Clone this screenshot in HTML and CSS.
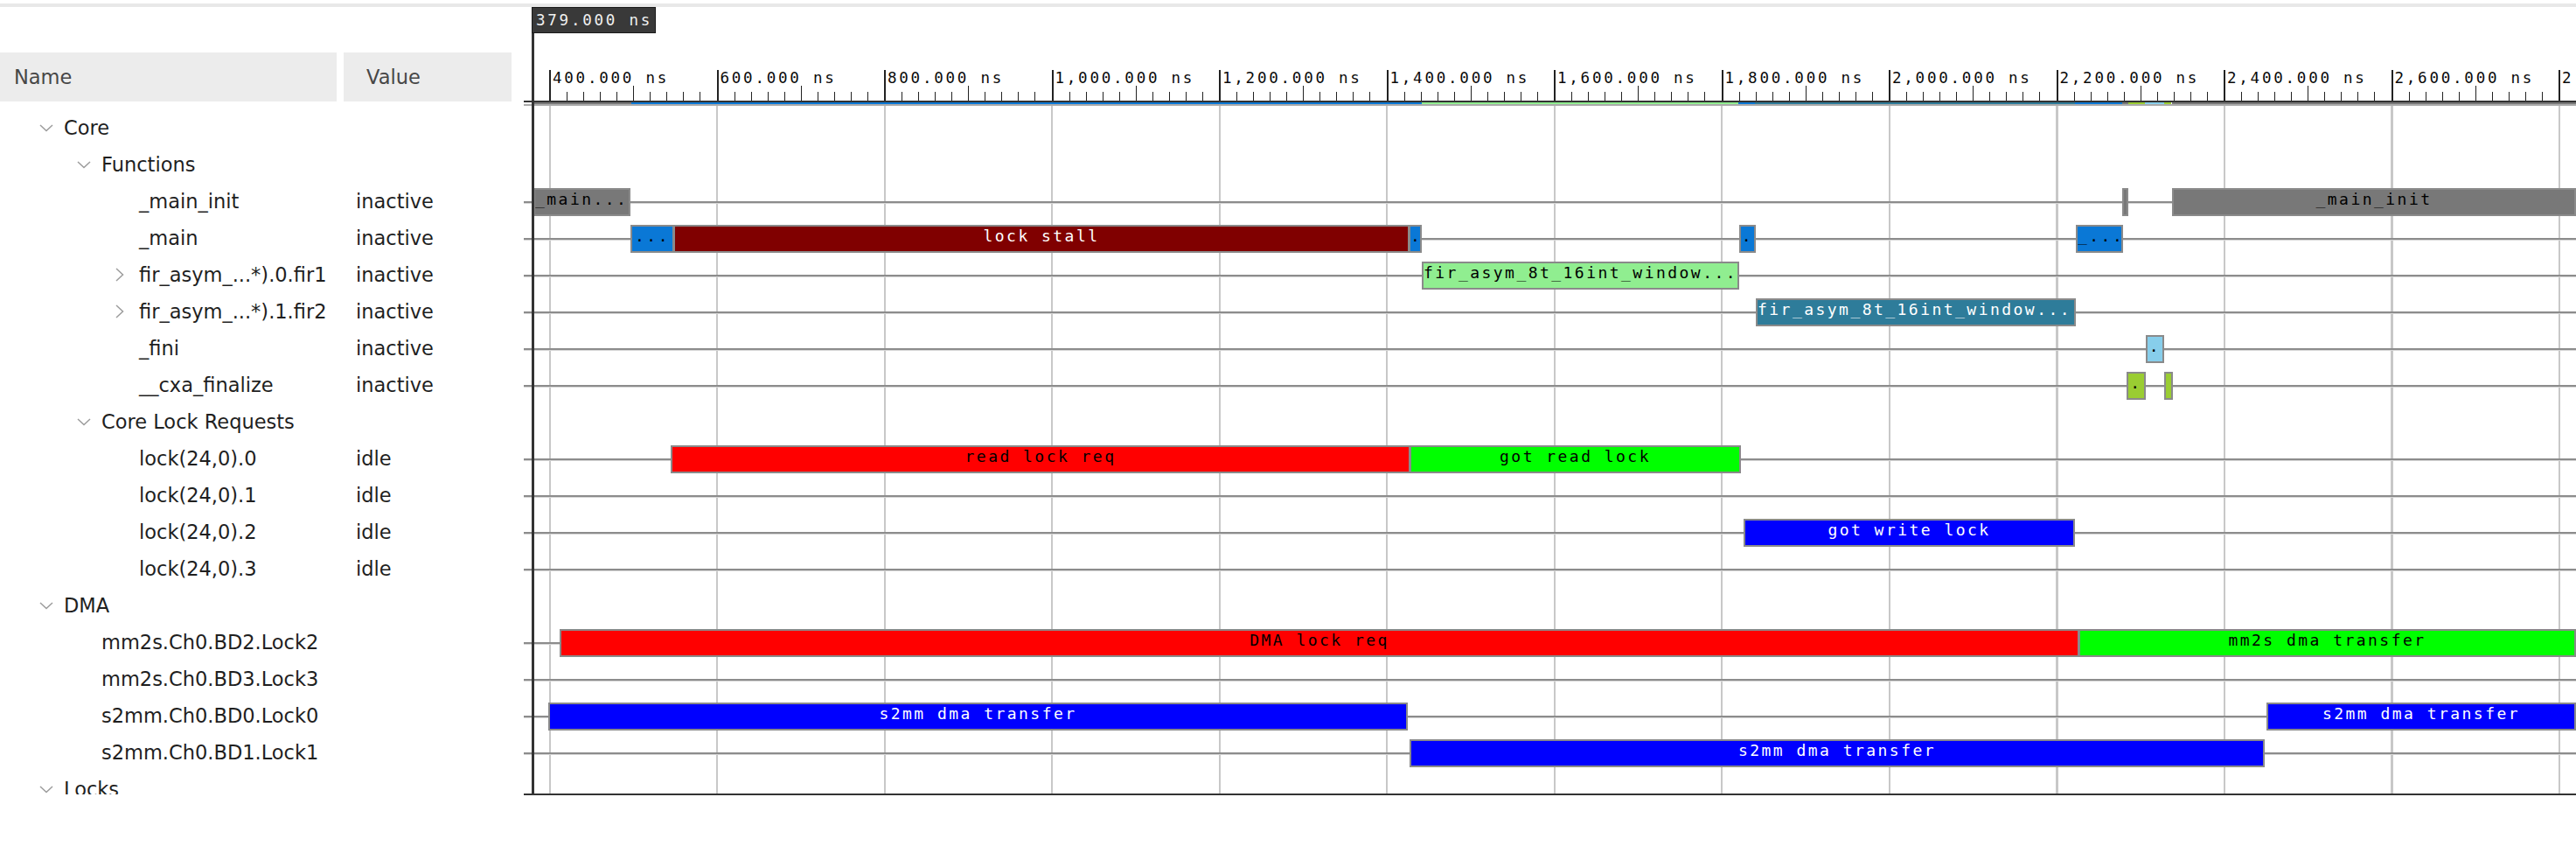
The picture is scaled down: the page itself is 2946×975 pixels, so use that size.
FILE: index.html
```html
<!DOCTYPE html>
<html>
<head>
<meta charset="utf-8">
<title>Trace</title>
<link rel="stylesheet" href="styles.css">
</head>
<body>
<div class="topband"></div>
<div class="main">
  <div class="tree">
    <div class="thead">
      <div class="th th-name">Name</div>
      <div class="th th-value">Value</div>
    </div>
    <div class="tbody">
      <div class="trow"><div class="tname l0"><svg class="chev" viewBox="0 0 28 16"><path d="M1 5l7 6.5 7-6.5"/></svg>Core</div><div class="tval"></div></div>
      <div class="trow"><div class="tname l1"><svg class="chev" viewBox="0 0 28 16"><path d="M1 5l7 6.5 7-6.5"/></svg>Functions</div><div class="tval"></div></div>
      <div class="trow"><div class="tname l2"><span class="chev"></span>_main_init</div><div class="tval">inactive</div></div>
      <div class="trow"><div class="tname l2"><span class="chev"></span>_main</div><div class="tval">inactive</div></div>
      <div class="trow"><div class="tname l2"><svg class="chev" viewBox="0 0 28 16"><path d="M2 1l7.5 7-7.5 7"/></svg>fir_asym_...*).0.fir1</div><div class="tval">inactive</div></div>
      <div class="trow"><div class="tname l2"><svg class="chev" viewBox="0 0 28 16"><path d="M2 1l7.5 7-7.5 7"/></svg>fir_asym_...*).1.fir2</div><div class="tval">inactive</div></div>
      <div class="trow"><div class="tname l2"><span class="chev"></span>_fini</div><div class="tval">inactive</div></div>
      <div class="trow"><div class="tname l2"><span class="chev"></span>__cxa_finalize</div><div class="tval">inactive</div></div>
      <div class="trow"><div class="tname l1"><svg class="chev" viewBox="0 0 28 16"><path d="M1 5l7 6.5 7-6.5"/></svg>Core Lock Requests</div><div class="tval"></div></div>
      <div class="trow"><div class="tname l2"><span class="chev"></span>lock(24,0).0</div><div class="tval">idle</div></div>
      <div class="trow"><div class="tname l2"><span class="chev"></span>lock(24,0).1</div><div class="tval">idle</div></div>
      <div class="trow"><div class="tname l2"><span class="chev"></span>lock(24,0).2</div><div class="tval">idle</div></div>
      <div class="trow"><div class="tname l2"><span class="chev"></span>lock(24,0).3</div><div class="tval">idle</div></div>
      <div class="trow"><div class="tname l0"><svg class="chev" viewBox="0 0 28 16"><path d="M1 5l7 6.5 7-6.5"/></svg>DMA</div><div class="tval"></div></div>
      <div class="trow"><div class="tname l1"><span class="chev"></span>mm2s.Ch0.BD2.Lock2</div><div class="tval"></div></div>
      <div class="trow"><div class="tname l1"><span class="chev"></span>mm2s.Ch0.BD3.Lock3</div><div class="tval"></div></div>
      <div class="trow"><div class="tname l1"><span class="chev"></span>s2mm.Ch0.BD0.Lock0</div><div class="tval"></div></div>
      <div class="trow"><div class="tname l1"><span class="chev"></span>s2mm.Ch0.BD1.Lock1</div><div class="tval"></div></div>
      <div class="trow"><div class="tname l0"><svg class="chev" viewBox="0 0 28 16"><path d="M1 5l7 6.5 7-6.5"/></svg>Locks</div><div class="tval"></div></div>
    </div>
  </div>

  <div class="wave">
    <div class="ruler">
      <div class="maj"><div class="maj-label">400.000 ns</div><div class="maj-ticks"><i></i><i></i><i></i><i></i><i></i><i></i><i></i><i></i><i></i><i></i></div></div>
      <div class="maj"><div class="maj-label">600.000 ns</div><div class="maj-ticks"><i></i><i></i><i></i><i></i><i></i><i></i><i></i><i></i><i></i><i></i></div></div>
      <div class="maj"><div class="maj-label">800.000 ns</div><div class="maj-ticks"><i></i><i></i><i></i><i></i><i></i><i></i><i></i><i></i><i></i><i></i></div></div>
      <div class="maj"><div class="maj-label">1,000.000 ns</div><div class="maj-ticks"><i></i><i></i><i></i><i></i><i></i><i></i><i></i><i></i><i></i><i></i></div></div>
      <div class="maj"><div class="maj-label">1,200.000 ns</div><div class="maj-ticks"><i></i><i></i><i></i><i></i><i></i><i></i><i></i><i></i><i></i><i></i></div></div>
      <div class="maj"><div class="maj-label">1,400.000 ns</div><div class="maj-ticks"><i></i><i></i><i></i><i></i><i></i><i></i><i></i><i></i><i></i><i></i></div></div>
      <div class="maj"><div class="maj-label">1,600.000 ns</div><div class="maj-ticks"><i></i><i></i><i></i><i></i><i></i><i></i><i></i><i></i><i></i><i></i></div></div>
      <div class="maj"><div class="maj-label">1,800.000 ns</div><div class="maj-ticks"><i></i><i></i><i></i><i></i><i></i><i></i><i></i><i></i><i></i><i></i></div></div>
      <div class="maj"><div class="maj-label">2,000.000 ns</div><div class="maj-ticks"><i></i><i></i><i></i><i></i><i></i><i></i><i></i><i></i><i></i><i></i></div></div>
      <div class="maj"><div class="maj-label">2,200.000 ns</div><div class="maj-ticks"><i></i><i></i><i></i><i></i><i></i><i></i><i></i><i></i><i></i><i></i></div></div>
      <div class="maj"><div class="maj-label">2,400.000 ns</div><div class="maj-ticks"><i></i><i></i><i></i><i></i><i></i><i></i><i></i><i></i><i></i><i></i></div></div>
      <div class="maj"><div class="maj-label">2,600.000 ns</div><div class="maj-ticks"><i></i><i></i><i></i><i></i><i></i><i></i><i></i><i></i><i></i><i></i></div></div>
      <div class="maj"><div class="maj-label">2,800.000 ns</div><div class="maj-ticks"><i></i><i></i><i></i><i></i><i></i><i></i><i></i><i></i><i></i><i></i></div></div>
    </div>
    <div class="rbase"></div>
    <div class="summary">
      <span class="seg c-gray" style="width:114px"></span>
      <span class="seg c-fn" style="width:904px"></span>
      <span class="seg c-lg" style="width:362px"></span>
      <span class="seg c-fn" style="width:19px"></span>
      <span class="seg c-teal" style="width:366px"></span>
      <span class="seg c-fn" style="width:54px"></span>
      <span class="seg c-gray" style="width:7px"></span>
      <span class="seg c-yg" style="width:19px"></span>
      <span class="seg c-sky" style="width:22px"></span>
      <span class="seg c-yg" style="width:8px"></span>
      <span class="seg" style="width:1px"></span>
      <span class="seg c-gray seg-rest"></span>
    </div>
    <div class="rgray"></div>
    <div class="tracks">
      <div class="trk"></div>
      <div class="trk"></div>
      <div class="trk sig">
        <div class="bar c-gray txl" style="left:11px;width:111px">_main...</div>
        <div class="bar c-gray" style="left:1828px;width:7px"></div>
        <div class="bar c-gray" style="left:1885px;width:462px">_main_init</div>
      </div>
      <div class="trk sig">
        <div class="bar c-fn" style="left:122px;width:50px">...</div>
        <div class="bar c-stall" style="left:171px;width:842px">lock stall</div>
        <div class="bar c-fn" style="left:1012px;width:15px">.</div>
        <div class="bar c-fn" style="left:1390px;width:19px">.</div>
        <div class="bar c-fn txl" style="left:1775px;width:54px">_...</div>
      </div>
      <div class="trk sig">
        <div class="bar c-lg txl" style="left:1027px;width:363px">fir_asym_8t_16int_window...</div>
      </div>
      <div class="trk sig">
        <div class="bar c-teal txl" style="left:1409px;width:366px">fir_asym_8t_16int_window...</div>
      </div>
      <div class="trk sig">
        <div class="bar c-sky" style="left:1855px;width:21px">.</div>
      </div>
      <div class="trk sig">
        <div class="bar c-yg" style="left:1833px;width:22px">.</div>
        <div class="bar c-yg" style="left:1876px;width:10px"></div>
      </div>
      <div class="trk"></div>
      <div class="trk sig">
        <div class="bar c-red" style="left:168px;width:846px">read lock req</div>
        <div class="bar c-grn" style="left:1013px;width:379px">got read lock</div>
      </div>
      <div class="trk sig"></div>
      <div class="trk sig">
        <div class="bar c-blu" style="left:1395px;width:379px">got write lock</div>
      </div>
      <div class="trk sig"></div>
      <div class="trk"></div>
      <div class="trk sig">
        <div class="bar c-red" style="left:41px;width:1738px">DMA lock req</div>
        <div class="bar c-grn" style="left:1778px;width:569px">mm2s dma transfer</div>
      </div>
      <div class="trk sig"></div>
      <div class="trk sig">
        <div class="bar c-blu" style="left:28px;width:983px">s2mm dma transfer</div>
        <div class="bar c-blu" style="left:1993px;width:354px">s2mm dma transfer</div>
      </div>
      <div class="trk sig">
        <div class="bar c-blu" style="left:1013px;width:978px">s2mm dma transfer</div>
      </div>
      <div class="trk"></div>
    </div>
    <div class="cursor"></div>
    <div class="cursor-label">379.000 ns</div>
  </div>
</div>
</body>
</html>
```

FILE: styles.css
```css
html, body {
  margin: 0;
  background: #ffffff;
}
body {
  padding-top: 4px;
  width: 2946px;
  height: 971px;
  overflow: hidden;
  font-family: "DejaVu Sans", sans-serif;
}
.topband {
  height: 4px;
  background: #e8e8e8;
}
.main {
  display: flex;
  height: 901px;
}

/* ---------- tree ---------- */
.tree {
  width: 599px;
  flex: none;
  height: 900px;
  overflow: hidden;
}
.thead {
  display: flex;
  gap: 8px;
  margin-top: 52px;
  height: 56px;
}
.th {
  background: #ececec;
  display: flex;
  align-items: center;
  font-size: 22.5px;
  color: #474747;
  box-sizing: border-box;
}
.th-name {
  width: 385px;
  padding-left: 16px;
}
.th-value {
  width: 192px;
  padding-left: 26px;
}
.tbody {
  padding-top: 9px;
}
.trow {
  display: flex;
  align-items: center;
  height: 42px;
  font-size: 22.5px;
  color: #1f1f1f;
  white-space: nowrap;
}
.tname {
  width: 393px;
  flex: none;
  display: flex;
  align-items: center;
  box-sizing: border-box;
}
.l0 { padding-left: 45px; }
.l1 { padding-left: 88px; }
.l2 { padding-left: 131px; }
.chev {
  display: block;
  width: 28px;
  height: 16px;
  flex: none;
}
.chev path {
  fill: none;
  stroke: #9c9c9c;
  stroke-width: 1.5;
}
.tval {
  padding-left: 14px;
}

/* ---------- waveform ---------- */
.wave {
  flex: 1;
  position: relative;
  display: flex;
  flex-direction: column;
  height: 901px;
  border-bottom: 2px solid #333333;
  box-sizing: border-box;
  overflow: hidden;
}
.ruler {
  flex: none;
  height: 107px;
  display: flex;
  align-items: flex-end;
  padding-left: 29px;
  box-sizing: border-box;
  overflow: hidden;
}
.maj {
  flex: none;
  width: 191.5px;
  display: flex;
  flex-direction: column;
}
.maj-label {
  height: 18px;
  line-height: 18px;
  border-left: 2px solid #222222;
  padding-left: 2px;
  font-family: "DejaVu Sans Mono", monospace;
  font-size: 17.5px;
  letter-spacing: 2.77px;
  color: #0a0a0a;
  white-space: nowrap;
}
.maj-ticks {
  height: 17px;
  display: flex;
  align-items: flex-end;
}
.maj-ticks i {
  flex: 1;
  height: 10px;
  border-left: 1px solid #222222;
}
.maj-ticks i:first-child {
  height: 17px;
  border-left-width: 2px;
}
.maj-ticks i:nth-child(6) {
  height: 17px;
}
.rbase {
  flex: none;
  height: 2px;
  background: #333333;
}
.summary {
  flex: none;
  height: 2px;
  display: flex;
  padding-left: 9px;
}
.seg {
  display: block;
  height: 2px;
  flex: none;
}
.seg-rest {
  flex: 1;
}
.rgray {
  flex: none;
  height: 2px;
  background: #ababab;
}
.tracks {
  flex: 1;
  min-height: 0;
  padding-top: 4px;
  overflow: hidden;
  background-image: repeating-linear-gradient(to right, #c8c8c8 0, #c8c8c8 2px, transparent 2px, transparent 191.5px);
  background-position: 29px 0;
  background-repeat: repeat-x;
}
.trk {
  position: relative;
  height: 42px;
}
.trk.sig {
  background: linear-gradient(to bottom, transparent 21px, #8c8c8c 21px, #8c8c8c 23px, #d6d6d6 23px, #d6d6d6 24px, transparent 24px);
}
.bar {
  position: absolute;
  top: 6px;
  height: 32px;
  box-sizing: border-box;
  border: 2px solid #8a8a8a;
  font-family: "DejaVu Sans Mono", monospace;
  font-size: 18px;
  line-height: 21px;
  letter-spacing: 2.46px;
  text-align: center;
  white-space: nowrap;
  overflow: hidden;
}
.txl {
  text-align: left;
}

/* colours */
.c-gray { background: #787878; color: #000000; }
.c-fn { background: #0a78d6; color: #000000; }
.c-stall { background: #800000; color: #ffffff; }
.c-lg { background: #90ee90; color: #000000; }
.c-teal { background: #2e7c9a; color: #ffffff; }
.c-sky { background: #87ceeb; color: #000000; }
.c-yg { background: #9acd32; color: #000000; }
.c-red { background: #ff0000; color: #000000; }
.c-grn { background: #00ff00; color: #000000; }
.c-blu { background: #0000ff; color: #ffffff; }

/* cursor overlay */
.cursor {
  position: absolute;
  left: 9px;
  top: 0;
  bottom: 0;
  width: 3px;
  background: #333333;
  z-index: 5;
}
.cursor-label {
  position: absolute;
  left: 9px;
  top: 0;
  width: 142px;
  height: 30px;
  box-sizing: border-box;
  background: #393939;
  border: 1px solid #1a1a1a;
  padding-left: 4px;
  color: #f0f0f0;
  font-family: "DejaVu Sans Mono", monospace;
  font-size: 17.5px;
  line-height: 28px;
  letter-spacing: 2.77px;
  white-space: nowrap;
  z-index: 6;
}
```
